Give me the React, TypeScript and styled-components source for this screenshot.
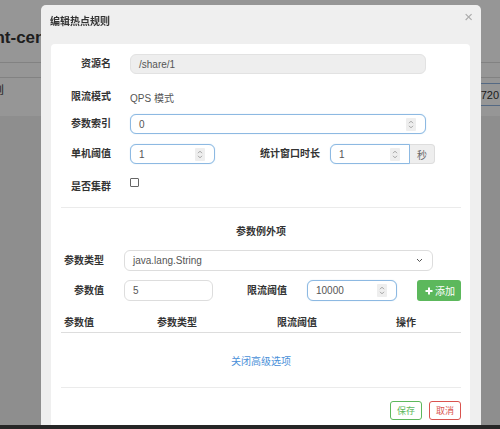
import React from 'react'
import styled, { createGlobalStyle, css } from 'styled-components'

const GlobalStyle = createGlobalStyle`
  html, body {
    margin: 0;
    padding: 0;
    height: 100%;
    overflow: hidden;
  }
  body {
    font-family: 'Liberation Sans', 'Noto Sans CJK SC', sans-serif;
  }
  * {
    box-sizing: border-box;
  }
`

/* ---------- page behind the dialog ---------- */

const Page = styled.div`
  height: 100vh;
  display: flex;
  flex-direction: column;
  background: #fff;
  overflow: hidden;
`
const PageHeader = styled.div`
  height: 63px;
  padding-top: 27px;
  border-bottom: 1px solid #ddd;
`
const BrandTitle = styled.h1`
  margin: 0 0 0 -15px;
  font-size: 17px;
  line-height: 22px;
  font-weight: bold;
  color: #333;
  white-space: nowrap;
`
const NavBar = styled.div`
  height: 15px;
  border-bottom: 1px solid #ddd;
`
const Toolbar = styled.div`
  height: 38px;
  display: flex;
  align-items: flex-start;
  justify-content: space-between;
  padding-top: 5px;
`
const NavTab = styled.span`
  margin: -2px 0 0 -7px;
  font-size: 11px;
  color: #333;
`
const AddressBox = styled.div`
  width: 120px;
  height: 23px;
  margin-right: -20px;
  padding-right: 20px;
  border: 1px solid #8fb3e0;
  text-align: right;
  font-size: 11px;
  line-height: 23px;
  color: #333;
`
const PageContent = styled.div`
  flex: 1;
  background: #f2f2f2;
`

/* ---------- dialog ---------- */

const Backdrop = styled.div`
  position: fixed;
  inset: 0;
  background: rgba(0, 0, 0, 0.41);
`
const Modal = styled.div`
  position: fixed;
  left: 41px;
  top: 5px;
  width: 440px;
  height: 420px;
  display: flex;
  flex-direction: column;
  background: #efefef;
  border-radius: 5px 5px 0 0;
`
const ModalHeader = styled.div`
  position: relative;
  height: 39px;
  padding: 11px 9px 0;
`
const ModalTitle = styled.div`
  font-size: 10px;
  line-height: 12px;
  font-weight: bold;
  color: #333;
`
const CloseButton = styled.span`
  position: absolute;
  top: 3px;
  right: 8px;
  font-size: 15px;
  color: #aaa;
`
const ModalBody = styled.div`
  flex: 1;
  margin: 0 11px 0 10px;
  padding: 10px 9px 0 10px;
  background: #fff;
  border-radius: 4px 4px 0 0;
`
const Form = styled.div`
  display: flex;
  flex-direction: column;
  gap: 10px;
`
const FormRow = styled.div<{ $shift?: number; $top?: boolean }>`
  display: flex;
  align-items: ${p => (p.$top ? 'flex-start' : 'center')};
  height: 20px;
  margin-top: ${p => p.$shift || 0}px;
  margin-bottom: ${p => -(p.$shift || 0)}px;
`
const Label = styled.div<{ $width: number; $gap?: number; $pad?: number }>`
  width: ${p => p.$width}px;
  flex: none;
  margin-right: ${p => (p.$gap === undefined ? 19 : p.$gap)}px;
  padding-top: ${p => p.$pad || 0}px;
  text-align: right;
  font-size: 10px;
  line-height: 12px;
  font-weight: bold;
  color: #333;
  white-space: nowrap;
`
const StaticText = styled.div`
  font-size: 10px;
  color: #555;
`

const fieldBase = css`
  height: 100%;
  display: flex;
  align-items: center;
  justify-content: space-between;
  padding: 0 9px 0 8px;
  font-size: 10px;
  color: #555;
  background: #fff;
`
const Field = styled.div<{ $width: number; $focus?: boolean; $disabled?: boolean; $addon?: boolean }>`
  ${fieldBase};
  width: ${p => p.$width}px;
  flex: none;
  border: 1px solid ${p => (p.$focus ? '#8db9e2' : '#ddd')};
  border-radius: ${p => (p.$addon ? '6px 0 0 6px' : '6px')};
  ${p =>
    p.$focus &&
    css`
      box-shadow: 0 0 1px rgba(102, 175, 233, 0.5);
    `}
  ${p =>
    p.$disabled &&
    css`
      background: #eee;
      border-color: #e2e2e2;
    `}
`
const Addon = styled.div`
  width: 25px;
  height: 100%;
  flex: none;
  display: flex;
  align-items: center;
  justify-content: center;
  background: #eee;
  border: 1px solid #ddd;
  border-left: none;
  border-radius: 0 4px 4px 0;
  font-size: 10px;
  color: #666;
`
const SpinBox = styled.span`
  width: 10px;
  height: 13px;
  display: flex;
  align-items: center;
  justify-content: center;
  background: #eee;
  border-radius: 1px;
`
const Checkbox = styled.span`
  width: 9px;
  height: 9px;
  margin-top: 4px;
  border: 1px solid #666;
  border-radius: 1px;
  background: #fff;
`
const Divider = styled.div<{ $top: number }>`
  margin-top: ${p => p.$top}px;
  border-top: 1px solid #ebebeb;
`
const SectionTitle = styled.div`
  margin-top: 14px;
  line-height: 20px;
  text-align: center;
  font-size: 10px;
  font-weight: bold;
  color: #333;
`
const ExceptionForm = styled.div`
  margin-top: 8px;
  display: flex;
  flex-direction: column;
  gap: 9px;
`
const ExceptionRow = styled.div`
  display: flex;
  align-items: center;
  height: 21px;
`
const AddButton = styled.button`
  width: 44px;
  height: 100%;
  margin-left: 20px;
  display: flex;
  align-items: center;
  gap: 2px;
  padding: 0 0 0 8px;
  border: none;
  border-radius: 3px;
  background: #5cb85c;
  color: #fff;
  font-family: inherit;
  font-size: 10px;
`
const TableHead = styled.div`
  margin-top: 10px;
  height: 22px;
  display: grid;
  grid-template-columns: 93px 120px 119px 1fr;
  align-items: center;
  padding-left: 3px;
  border-bottom: 1px solid #ddd;
  font-size: 10px;
  font-weight: bold;
  color: #333;
`
const ToggleLink = styled.a`
  display: block;
  margin-top: 20px;
  line-height: 18px;
  text-align: center;
  font-size: 10px;
  color: #4a90d9;
  text-decoration: none;
`
const Footer = styled.div`
  margin-top: 13px;
  display: flex;
  justify-content: flex-end;
  gap: 7px;
`
const OutlineButton = styled.button<{ $color: string }>`
  width: 32px;
  height: 19px;
  padding: 0;
  border: 1px solid ${p => p.$color};
  border-radius: 3px;
  background: #fff;
  color: ${p => p.$color};
  font-family: inherit;
  font-size: 9px;
`
const BottomStrip = styled.div`
  position: fixed;
  left: 0;
  right: 0;
  bottom: 0;
  height: 4px;
  background: #262626;
`

const Spinner = () => (
  <SpinBox>
    <svg width="6" height="9" viewBox="0 0 6 9" fill="none" stroke="#999" strokeWidth="0.9">
      <path d="M1 3.2 L3 1.2 L5 3.2" />
      <path d="M1 5.8 L3 7.8 L5 5.8" />
    </svg>
  </SpinBox>
)

const Chevron = () => (
  <svg width="7" height="5" viewBox="0 0 7 5" fill="none" stroke="#555" strokeWidth="1">
    <path d="M1 1 L3.5 3.5 L6 1" />
  </svg>
)

const PlusIcon = () => (
  <svg width="8" height="8" viewBox="0 0 8 8" fill="none" stroke="#fff" strokeWidth="2">
    <path d="M4 0.5 V7.5 M0.5 4 H7.5" />
  </svg>
)

const App = () => {
  return (
    <>
      <GlobalStyle />
      <Page>
        <PageHeader>
          <BrandTitle>ent-center</BrandTitle>
        </PageHeader>
        <NavBar />
        <Toolbar>
          <NavTab>则</NavTab>
          <AddressBox>127.0.0.1:8720</AddressBox>
        </Toolbar>
        <PageContent />
      </Page>
      <Backdrop />
      <Modal>
        <ModalHeader>
          <ModalTitle>编辑热点规则</ModalTitle>
          <CloseButton>×</CloseButton>
        </ModalHeader>
        <ModalBody>
          <Form>
            <FormRow>
              <Label $width={50}>资源名</Label>
              <Field $width={296} $disabled>/share/1</Field>
            </FormRow>
            <FormRow $shift={3}>
              <Label $width={50}>限流模式</Label>
              <StaticText>QPS 模式</StaticText>
            </FormRow>
            <FormRow>
              <Label $width={50}>参数索引</Label>
              <Field $width={296} $focus>
                0
                <Spinner />
              </Field>
            </FormRow>
            <FormRow>
              <Label $width={50}>单机阈值</Label>
              <Field $width={85} $focus>
                1
                <Spinner />
              </Field>
              <Label $width={105} $gap={10}>统计窗口时长</Label>
              <Field $width={80} $focus $addon>
                1
                <Spinner />
              </Field>
              <Addon>秒</Addon>
            </FormRow>
            <FormRow $top>
              <Label $width={50} $pad={7}>是否集群</Label>
              <Checkbox />
            </FormRow>
          </Form>

          <Divider $top={13} />
          <SectionTitle>参数例外项</SectionTitle>

          <ExceptionForm>
            <ExceptionRow>
              <Label $width={43} $gap={20}>参数类型</Label>
              <Field $width={309}>
                java.lang.String
                <Chevron />
              </Field>
            </ExceptionRow>
            <ExceptionRow>
              <Label $width={43} $gap={20}>参数值</Label>
              <Field $width={89}>5</Field>
              <Label $width={74} $gap={20}>限流阈值</Label>
              <Field $width={90} $focus>
                10000
                <Spinner />
              </Field>
              <AddButton>
                <PlusIcon />
                添加
              </AddButton>
            </ExceptionRow>
          </ExceptionForm>

          <TableHead>
            <span>参数值</span>
            <span>参数类型</span>
            <span>限流阈值</span>
            <span>操作</span>
          </TableHead>

          <ToggleLink>关闭高级选项</ToggleLink>
          <Divider $top={16} />

          <Footer>
            <OutlineButton $color="#5cb85c">保存</OutlineButton>
            <OutlineButton $color="#d9534f">取消</OutlineButton>
          </Footer>
        </ModalBody>
      </Modal>
      <BottomStrip />
    </>
  )
}

export default App
